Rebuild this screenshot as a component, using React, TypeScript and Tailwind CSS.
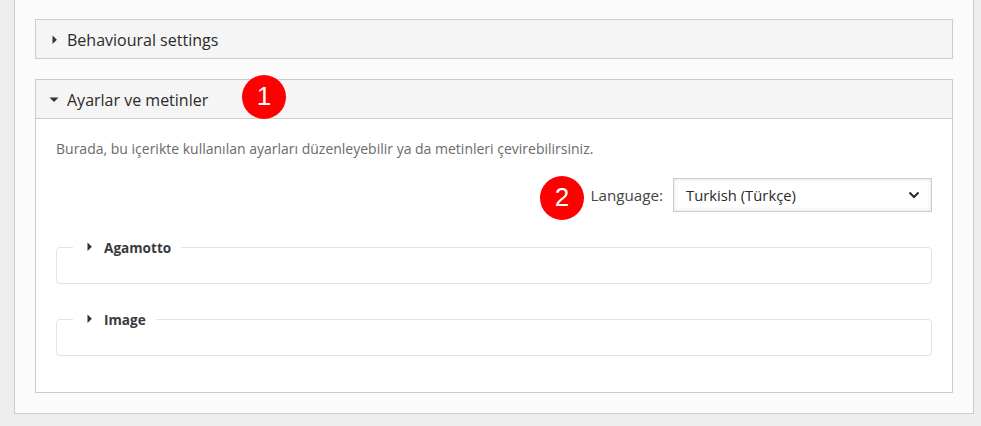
const font = { fontFamily: '"Open Sans", sans-serif' };

function Badge({ n, className }: { n: number; className: string }) {
  return (
    <div
      style={{ fontFamily: '"Liberation Sans", sans-serif' }}
      className={"absolute flex h-[44px] w-[44px] items-center justify-center rounded-full bg-[#fe0000] pb-[2px] text-[26px] leading-none text-white " + className}
    >
      {n}
    </div>
  );
}

function Caret({ open }: { open?: boolean }) {
  return (
    <svg width="10" height="10" viewBox="0 0 10 10" className="shrink-0 text-[#333]">
      {open ? <path d="M0.5 2.6h9L5 7z" fill="currentColor" /> : <path d="M2.5 0.6v8.4l4.4-4.2z" fill="currentColor" />}
    </svg>
  );
}

function Group({ title }: { title: string }) {
  return (
    <fieldset className="h-[45px] rounded-[4px] border border-[#e3e3ea] px-[16px]">
      <legend className="flex h-[16px] items-center gap-[9px] pl-[12px] pr-[10px] text-[13.6px] font-bold leading-[16px] text-[#3a3a40]">
        <Caret />
        <span className="pt-[2px]">{title}</span>
      </legend>
    </fieldset>
  );
}

export default function App() {
  return (
    <div style={font} className="h-[426px] w-[981px] overflow-hidden bg-[#eeeeee] pl-[14px]">
      <div className="h-[414px] w-[960px] border-x border-b border-[#cccccc] bg-[#fbfbfb] px-[20px] pt-[19px]">
        <div className="flex h-[40px] items-center gap-[7px] border border-[#cccccc] bg-[#f5f5f5] pl-[14px] pt-[2px] text-[16px] text-[#2b2b2b]">
          <Caret />
          <span>Behavioural settings</span>
        </div>

        <div className="relative mt-[20px] h-[314px] border border-[#cccccc] bg-white">
          <div className="flex h-[39px] items-center gap-[8px] border-b border-[#cccccc] bg-[#f5f5f5] pl-[13px] pt-[2px] text-[16px] text-[#2b2b2b]">
            <Caret open />
            <span>Ayarlar ve metinler</span>
          </div>
          <Badge n={1} className="left-[206px] top-[-5px]" />

          <div className="px-[20px]">
            <p className="mt-[20px] text-[14px] leading-[20px] text-[#6b6b6b]">
              Burada, bu içerikte kullanılan ayarları düzenleyebilir ya da metinleri çevirebilirsiniz.
            </p>
            <div className="mt-[19px] flex h-[34px] items-center justify-end">
              <span className="mr-[10px] text-[15.2px] text-[#444]">Language:</span>
              <div className="flex h-[34px] w-[259px] items-center justify-between border border-[#cccccc] bg-white pl-[12px] pr-[11px] text-[14.8px] text-[#2b2b2b] shadow-[inset_0_0_5px_rgba(0,0,0,0.12)]">
                <span>Turkish (Türkçe)</span>
                <svg width="12" height="8" viewBox="0 0 12 8" fill="none" stroke="#1f2a3a" strokeWidth="2">
                  <path d="M1.5 1.5 6 6l4.5-4.5" />
                </svg>
              </div>
            </div>
            <div className="mt-[27px] flex flex-col gap-[27px]">
              <Group title="Agamotto" />
              <Group title="Image" />
            </div>
          </div>
          <Badge n={2} className="left-[504px] top-[96px]" />
        </div>
      </div>
    </div>
  );
}
